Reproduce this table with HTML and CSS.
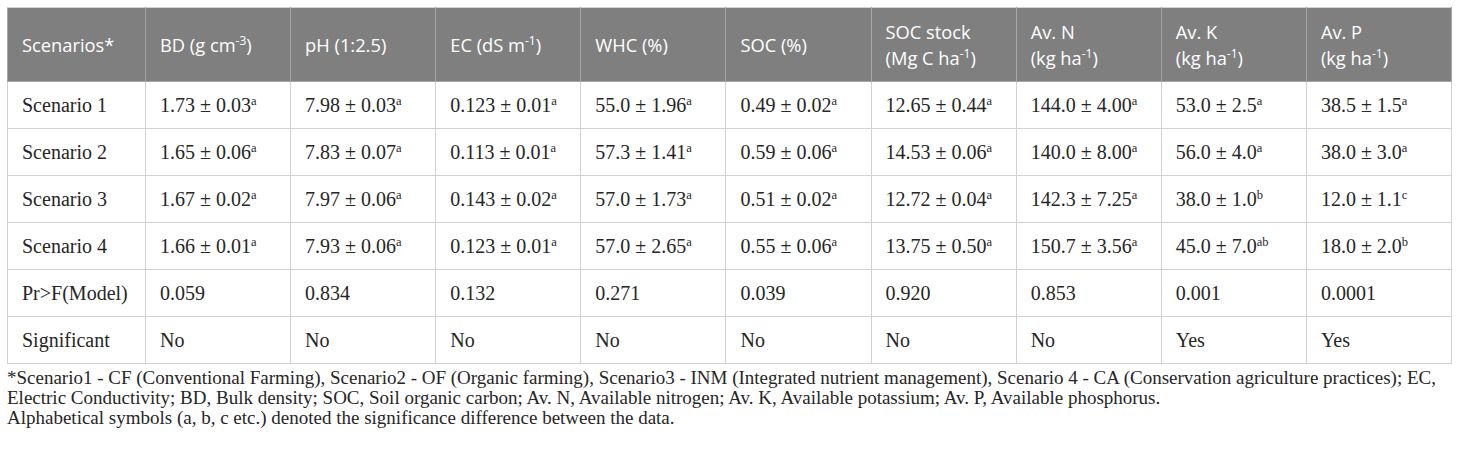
FILE: index.html
```html
<!DOCTYPE html>
<html>
<head>
<meta charset="utf-8">
<link rel="stylesheet" href="styles.css">
</head>
<body>
<table class="data">
  <colgroup>
    <col class="col-first">
    <col><col><col><col><col><col><col><col><col>
  </colgroup>
  <thead>
    <tr>
      <th>Scenarios*</th>
      <th>BD (g cm<sup>-3</sup>)</th>
      <th>pH (1:2.5)</th>
      <th>EC (dS m<sup>-1</sup>)</th>
      <th>WHC (%)</th>
      <th>SOC (%)</th>
      <th>SOC stock<br>(Mg C ha<sup>-1</sup>)</th>
      <th>Av. N<br>(kg ha<sup>-1</sup>)</th>
      <th>Av. K<br>(kg ha<sup>-1</sup>)</th>
      <th>Av. P<br>(kg ha<sup>-1</sup>)</th>
    </tr>
  </thead>
  <tbody>
    <tr>
      <td>Scenario 1</td>
      <td>1.73 ± 0.03<sup>a</sup></td>
      <td>7.98 ± 0.03<sup>a</sup></td>
      <td>0.123 ± 0.01<sup>a</sup></td>
      <td>55.0 ± 1.96<sup>a</sup></td>
      <td>0.49 ± 0.02<sup>a</sup></td>
      <td>12.65 ± 0.44<sup>a</sup></td>
      <td>144.0 ± 4.00<sup>a</sup></td>
      <td>53.0 ± 2.5<sup>a</sup></td>
      <td>38.5 ± 1.5<sup>a</sup></td>
    </tr>
    <tr>
      <td>Scenario 2</td>
      <td>1.65 ± 0.06<sup>a</sup></td>
      <td>7.83 ± 0.07<sup>a</sup></td>
      <td>0.113 ± 0.01<sup>a</sup></td>
      <td>57.3 ± 1.41<sup>a</sup></td>
      <td>0.59 ± 0.06<sup>a</sup></td>
      <td>14.53 ± 0.06<sup>a</sup></td>
      <td>140.0 ± 8.00<sup>a</sup></td>
      <td>56.0 ± 4.0<sup>a</sup></td>
      <td>38.0 ± 3.0<sup>a</sup></td>
    </tr>
    <tr>
      <td>Scenario 3</td>
      <td>1.67 ± 0.02<sup>a</sup></td>
      <td>7.97 ± 0.06<sup>a</sup></td>
      <td>0.143 ± 0.02<sup>a</sup></td>
      <td>57.0 ± 1.73<sup>a</sup></td>
      <td>0.51 ± 0.02<sup>a</sup></td>
      <td>12.72 ± 0.04<sup>a</sup></td>
      <td>142.3 ± 7.25<sup>a</sup></td>
      <td>38.0 ± 1.0<sup>b</sup></td>
      <td>12.0 ± 1.1<sup>c</sup></td>
    </tr>
    <tr>
      <td>Scenario 4</td>
      <td>1.66 ± 0.01<sup>a</sup></td>
      <td>7.93 ± 0.06<sup>a</sup></td>
      <td>0.123 ± 0.01<sup>a</sup></td>
      <td>57.0 ± 2.65<sup>a</sup></td>
      <td>0.55 ± 0.06<sup>a</sup></td>
      <td>13.75 ± 0.50<sup>a</sup></td>
      <td>150.7 ± 3.56<sup>a</sup></td>
      <td>45.0 ± 7.0<sup>ab</sup></td>
      <td>18.0 ± 2.0<sup>b</sup></td>
    </tr>
    <tr>
      <td>Pr&gt;F(Model)</td>
      <td>0.059</td>
      <td>0.834</td>
      <td>0.132</td>
      <td>0.271</td>
      <td>0.039</td>
      <td>0.920</td>
      <td>0.853</td>
      <td>0.001</td>
      <td>0.0001</td>
    </tr>
    <tr>
      <td>Significant</td>
      <td>No</td>
      <td>No</td>
      <td>No</td>
      <td>No</td>
      <td>No</td>
      <td>No</td>
      <td>No</td>
      <td>Yes</td>
      <td>Yes</td>
    </tr>
  </tbody>
</table>
<div class="notes">
  <p>*Scenario1 - CF (Conventional Farming), Scenario2 - OF (Organic farming), Scenario3 - INM (Integrated nutrient management), Scenario 4 - CA (Conservation agriculture practices); EC, Electric Conductivity; BD, Bulk density; SOC, Soil organic carbon; Av. N, Available nitrogen; Av. K, Available potassium; Av. P, Available phosphorus.</p>
  <p>Alphabetical symbols (a, b, c etc.) denoted the significance difference between the data.</p>
</div>
</body>
</html>
```
FILE: styles.css
```css
html, body {
  margin: 0;
  padding: 0;
  background: #ffffff;
}
body {
  padding: 7px 8px 0 7px;
  font-family: "Liberation Serif", "Times New Roman", serif;
  color: #262626;
}
.data {
  width: 1445px;
  border-collapse: collapse;
  table-layout: fixed;
  border: 1px solid #d0d0d0;
}
.col-first {
  width: 138px;
}
.data th {
  background: #7f7f7f;
  color: #ffffff;
  font-family: "Open Sans", "Noto Sans", sans-serif;
  font-weight: 400;
  font-size: 18.3px;
  line-height: 26px;
  text-align: left;
  vertical-align: middle;
  height: 74px;
  padding: 0 8px 0 14px;
  border: 1px solid #a6a6a6;
  border-top-color: #d0d0d0;
  box-sizing: border-box;
}
.data td {
  font-size: 20px;
  line-height: 24px;
  height: 47px;
  padding: 0 8px 0 14px;
  border: 1px solid #d0d0d0;
  vertical-align: middle;
  white-space: nowrap;
  box-sizing: border-box;
}
.data sup {
  font-size: 12.5px;
  line-height: 0;
  vertical-align: 7px;
}
.data th sup {
  font-size: 12px;
  vertical-align: 7px;
}
.notes {
  margin-top: 4px;
  font-size: 19px;
  line-height: 20px;
  color: #262626;
}
.notes p {
  margin: 0;
}
```
